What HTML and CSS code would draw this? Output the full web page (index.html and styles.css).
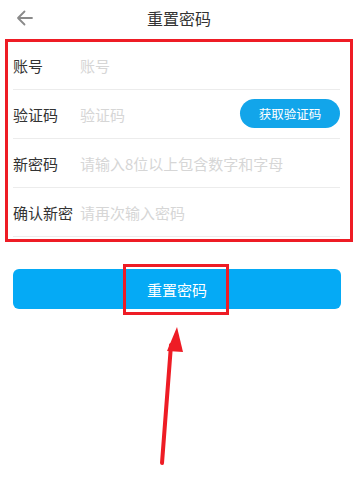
FILE: index.html
```html
<!DOCTYPE html>
<html lang="zh">
<head>
<meta charset="utf-8">
<title>重置密码</title>
<link rel="stylesheet" href="styles.css">
</head>
<body>
<div class="page">
  <header class="header">
    <span class="back">
      <svg width="17" height="16" viewBox="0 0 17 16"><path d="M16 8H2M8.5 1.5L2 8l6.5 6.5" fill="none" stroke="#8a8a8a" stroke-width="1.8" stroke-linecap="round" stroke-linejoin="round"/></svg>
    </span>
    <h1 class="title">重置密码</h1>
    <span></span>
  </header>

  <div class="form-box">
    <div class="row"><span class="label">账号</span><span class="ph">账号</span></div>
    <div class="row"><span class="label">验证码</span><span class="ph">验证码</span><button class="code-btn">获取验证码</button></div>
    <div class="row"><span class="label">新密码</span><span class="ph">请输入8位以上包含数字和字母</span></div>
    <div class="row"><span class="label">确认新密</span><span class="ph">请再次输入密码</span></div>
  </div>

  <div class="submit-wrap">
    <button class="submit">重置密码</button>
    <span class="mark"></span>
  </div>

  <svg class="arrow" width="358" height="492" viewBox="0 0 358 492">
    <line x1="162" y1="463" x2="171" y2="345" stroke="#ee1c25" stroke-width="4" stroke-linecap="round"/>
    <polygon points="177,327 167,351 183,352" fill="#ee1c25"/>
  </svg>
</div>
</body>
</html>
```

FILE: styles.css
```css
* { box-sizing: border-box; }
html, body { margin: 0; padding: 0; background: #fff; }
body {
  font-family: "Noto Sans CJK SC", "Noto Sans", sans-serif;
  width: 358px;
  height: 492px;
  overflow: hidden;
}
.page { position: relative; width: 358px; height: 492px; }
.header {
  height: 39px;
  display: grid;
  grid-template-columns: 60px 1fr 60px;
  align-items: center;
  padding-bottom: 4px;
}
.back { display: flex; align-items: center; padding-left: 16px; }
.title {
  margin: 0;
  text-align: center;
  font-size: 16px;
  font-weight: normal;
  color: #333;
}
.form-box {
  margin-left: 5px;
  width: 348px;
  border: 3px solid #ee1c25;
  padding-bottom: 2px;
}
.row {
  height: 49px;
  margin: 0 10px 0 5px;
  border-bottom: 1px solid #ececec;
  display: flex;
  align-items: center;
}
.row:first-child { height: 48px; }
.label {
  width: 67px;
  flex: none;
  font-size: 15px;
  color: #333;
}
.ph {
  flex: 1;
  font-size: 15px;
  color: #d6d6d6;
  white-space: nowrap;
}
.code-btn {
  width: 100px;
  height: 29px;
  border: none;
  border-radius: 15px;
  background: #12a5ea;
  color: #fff;
  font-family: inherit;
  font-size: 12.5px;
  padding: 0;
  margin-bottom: 1px;
}
.submit-wrap {
  position: relative;
  margin: 27px 0 0 13px;
  width: 328px;
}
.submit {
  display: block;
  width: 328px;
  height: 40px;
  border: none;
  border-radius: 6px;
  background: #05aaf5;
  color: #fff;
  font-family: inherit;
  font-size: 15px;
  padding: 0;
}
.mark {
  position: absolute;
  left: 110px;
  top: -5px;
  width: 106px;
  height: 51px;
  border: 3px solid #ee1c25;
}
.arrow { position: absolute; left: 0; top: 0; pointer-events: none; }
```
